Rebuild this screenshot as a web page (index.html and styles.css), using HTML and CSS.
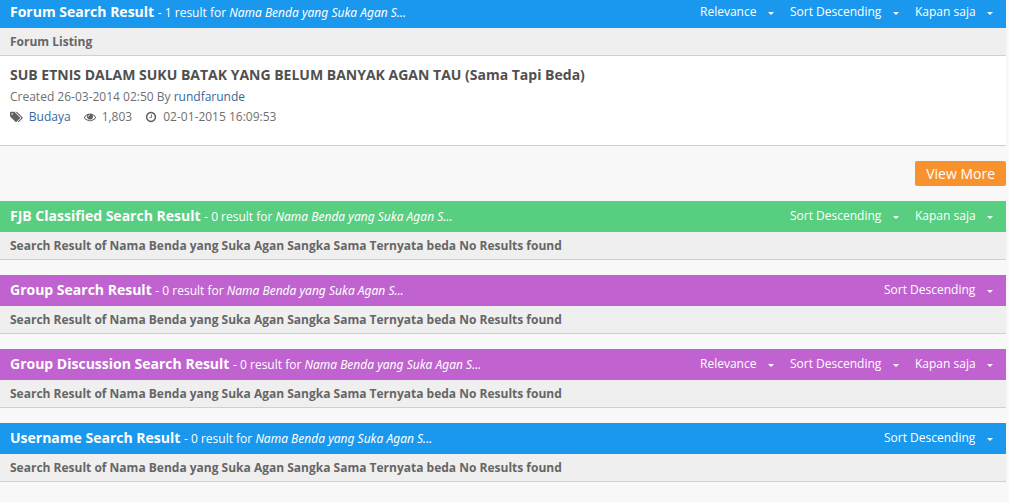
FILE: index.html
```html
<!DOCTYPE html>
<html lang="id">
<head>
<meta charset="utf-8">
<meta name="viewport" content="width=device-width, initial-scale=1">
<title>Search Result</title>
<link rel="stylesheet" href="styles.css">
</head>
<body>
<main class="results">
  <section class="panel">
    <header class="bar bar-blue bar-first">
      <h2 class="bar-title">Forum Search Result <small class="bar-count">- 1 result for <em class="query">Nama Benda yang Suka Agan S...</em></small></h2>
      <div class="filters">
        <label class="filter"><select class="filter-select" aria-label="Sort by"><option>Relevance</option></select></label>
        <label class="filter"><select class="filter-select" aria-label="Order"><option>Sort Descending</option></select></label>
        <label class="filter"><select class="filter-select" aria-label="Time"><option>Kapan saja</option></select></label>
      </div>
    </header>
    <p class="subbar">Forum Listing</p>
    <article class="thread">
      <h3 class="thread-title">SUB ETNIS DALAM SUKU BATAK YANG BELUM BANYAK AGAN TAU (Sama Tapi Beda)</h3>
      <p class="thread-line">Created 26-03-2014 02:50 By <a class="link" href="#">rundfarunde</a></p>
      <div class="thread-meta">
        <span class="meta"><svg class="icon" viewBox="0 0 1920 1792" aria-hidden="true"><path d="M448 448q0-53-37.500-90.500t-90.500-37.500-90.500 37.500-37.500 90.500 37.500 90.500 90.500 37.500 90.500-37.500 37.500-90.500zm1067 576q0 53-37 90l-491 492q-39 37-91 37-53 0-90-37l-715-716q-38-37-64.500-101t-26.500-117v-416q0-52 38-90t90-38h416q53 0 117 26.500t102 64.500l715 714q37 39 37 91zm384 0q0 53-37 90l-491 492q-39 37-91 37-36 0-59-14t-53-45l470-470q37-37 37-90 0-52-37-91l-715-714q-38-38-102-64.500t-117-26.500h224q53 0 117 26.500t102 64.500l715 714q37 39 37 91z"/></svg><a class="link" href="#">Budaya</a></span>
        <span class="meta"><svg class="icon" viewBox="0 0 1792 1792" aria-hidden="true"><path d="M1664 960q-152-236-381-353 61 104 61 225 0 185-131.500 316.500t-316.500 131.500-316.500-131.500-131.500-316.500q0-121 61-225-229 117-381 353 133 205 333.500 326.500t434.500 121.500 434.500-121.500 333.500-326.500zm-720-384q0-20-14-34t-34-14q-125 0-214.500 89.500t-89.500 214.500q0 20 14 34t34 14 34-14 14-34q0-86 61-147t147-61q20 0 34-14t14-34zm848 384q0 34-20 69-140 230-376.500 368.500t-499.500 138.500-499.500-139-376.500-368q-20-35-20-69t20-69q140-229 376.500-368t499.500-139 499.500 139 376.500 368q20 35 20 69z"/></svg>1,803</span>
        <span class="meta"><svg class="icon" viewBox="0 0 1792 1792" aria-hidden="true"><path d="M1024 544v448q0 14-9 23t-23 9h-320q-14 0-23-9t-9-23v-64q0-14 9-23t23-9h224v-352q0-14 9-23t23-9h64q14 0 23 9t9 23zm416 352q0-148-73-273t-198-198-273-73-273 73-198 198-73 273 73 273 198 198 273 73 273-73 198-198 73-273zm224 0q0 209-103 385.500t-279.500 279.500-385.500 103-385.500-103-279.500-279.500-103-385.500 103-385.500 279.500-279.500 385.500-103 385.500 103 279.500 279.500 103 385.500z"/></svg>02-01-2015 16:09:53</span>
      </div>
    </article>
    <div class="more"><button class="more-button" type="button">View More</button></div>
  </section>

  <section class="panel">
    <header class="bar bar-green">
      <h2 class="bar-title">FJB Classified Search Result <small class="bar-count">- 0 result for <em class="query">Nama Benda yang Suka Agan S...</em></small></h2>
      <div class="filters">
        <label class="filter"><select class="filter-select" aria-label="Order"><option>Sort Descending</option></select></label>
        <label class="filter"><select class="filter-select" aria-label="Time"><option>Kapan saja</option></select></label>
      </div>
    </header>
    <p class="subbar">Search Result of Nama Benda yang Suka Agan Sangka Sama Ternyata beda No Results found</p>
  </section>

  <section class="panel">
    <header class="bar bar-purple">
      <h2 class="bar-title">Group Search Result <small class="bar-count">- 0 result for <em class="query">Nama Benda yang Suka Agan S...</em></small></h2>
      <div class="filters">
        <label class="filter"><select class="filter-select" aria-label="Order"><option>Sort Descending</option></select></label>
      </div>
    </header>
    <p class="subbar">Search Result of Nama Benda yang Suka Agan Sangka Sama Ternyata beda No Results found</p>
  </section>

  <section class="panel">
    <header class="bar bar-purple">
      <h2 class="bar-title">Group Discussion Search Result <small class="bar-count">- 0 result for <em class="query">Nama Benda yang Suka Agan S...</em></small></h2>
      <div class="filters">
        <label class="filter"><select class="filter-select" aria-label="Sort by"><option>Relevance</option></select></label>
        <label class="filter"><select class="filter-select" aria-label="Order"><option>Sort Descending</option></select></label>
        <label class="filter"><select class="filter-select" aria-label="Time"><option>Kapan saja</option></select></label>
      </div>
    </header>
    <p class="subbar">Search Result of Nama Benda yang Suka Agan Sangka Sama Ternyata beda No Results found</p>
  </section>

  <section class="panel">
    <header class="bar bar-blue">
      <h2 class="bar-title">Username Search Result <small class="bar-count">- 0 result for <em class="query">Nama Benda yang Suka Agan S...</em></small></h2>
      <div class="filters">
        <label class="filter"><select class="filter-select" aria-label="Order"><option>Sort Descending</option></select></label>
      </div>
    </header>
    <p class="subbar">Search Result of Nama Benda yang Suka Agan Sangka Sama Ternyata beda No Results found</p>
  </section>
</main>
</body>
</html>
```
FILE: styles.css
```css
* {
  box-sizing: border-box;
}

body {
  margin: 0;
  background: #f8f8f8;
  color: #707070;
  font-family: "Open Sans", "Liberation Sans", sans-serif;
  font-size: 12px;
  line-height: 20px;
}

.results {
  display: flex;
  flex-direction: column;
  gap: 15px;
  padding-right: 3px;
}

.bar {
  display: flex;
  justify-content: space-between;
  align-items: center;
  padding: 5px 13px 6px 10px;
  color: #fff;
}

.bar-first {
  padding-top: 2px;
}

.bar-blue {
  background: #1998ed;
}

.bar-green {
  background: #58ce80;
}

.bar-purple {
  background: #c063d0;
}

.bar-title {
  margin: 0;
  font-size: 14px;
  font-weight: 700;
  line-height: 20px;
}

.bar-count {
  font-size: 12px;
  font-weight: 400;
  line-height: 16px;
}

.query {
  font-family: "Noto Sans", "Open Sans", sans-serif;
}

.filters {
  display: flex;
  gap: 16px;
}

.filter {
  display: flex;
  align-items: center;
  gap: 11px;
}

.filter::after {
  content: "";
  margin-top: 3px;
  border: 3px solid transparent;
  border-top-color: #fff;
  border-bottom: 0;
}

.filter-select {
  appearance: none;
  padding: 0;
  border: 0;
  background: transparent;
  color: inherit;
  font: inherit;
}

.subbar {
  margin: 0;
  padding: 4px 10px 3px;
  border-bottom: 1px solid #d0d0d0;
  background: #efefef;
  color: #666;
  font-weight: 700;
}

.thread {
  padding: 9px 10px 18px;
  border-bottom: 1px solid #d0d0d0;
  background: #fff;
}

.thread-title {
  margin: 0 0 2px;
  color: #505050;
  font-size: 14px;
  font-weight: 700;
  line-height: 20px;
}

.thread-line {
  margin: 0;
}

.thread-meta {
  display: flex;
  gap: 13px;
}

.meta {
  display: flex;
  align-items: center;
  gap: 6px;
}

.icon {
  height: 12px;
  fill: #606060;
}

.link {
  color: #34699a;
  text-decoration: none;
}

.more {
  display: flex;
  justify-content: flex-end;
  padding-top: 15px;
}

.more-button {
  padding: 3px 11px 2px;
  border: 0;
  border-radius: 2px;
  background: #f7922e;
  color: #fff;
  font: inherit;
  font-size: 14px;
  line-height: 20px;
}
```
